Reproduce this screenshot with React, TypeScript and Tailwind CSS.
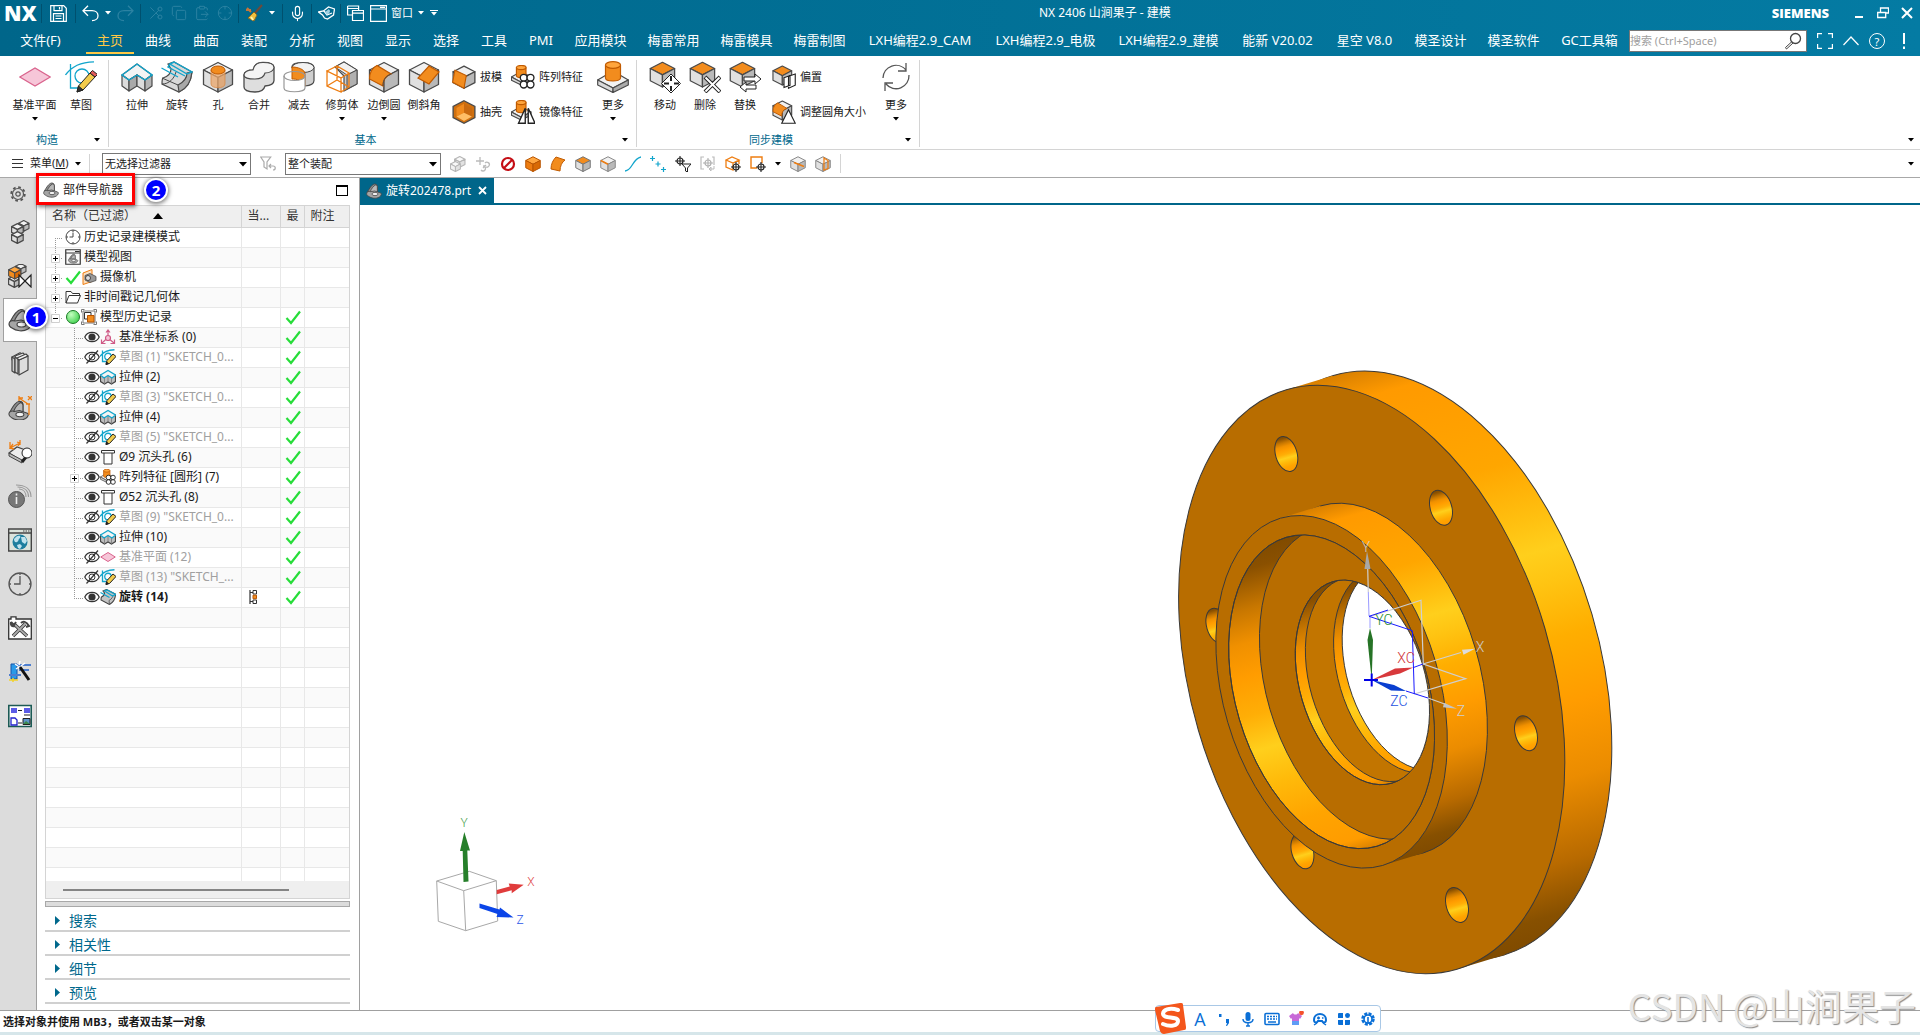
import type { ReactNode } from 'react';
import { ClipboardPaste, Copy, Crosshair, Mic, Scissors } from 'lucide-react';

/* ---------- shared drawing helpers ---------- */

function Svg({ size = 32, box = 32, children }: { size?: number; box?: number; children: ReactNode }) {
  return (
    <svg width={size} height={size} viewBox={`0 0 ${box} ${box}`} fill="none" aria-hidden="true" className="shrink-0">
      {children}
    </svg>
  );
}

function Caret({ className = 'text-black' }: { className?: string }) {
  return (
    <svg width="6" height="4" viewBox="0 0 6 4" aria-hidden="true" className={className}>
      <path d="M0 0h6L3 3.6z" fill="currentColor" />
    </svg>
  );
}

const EDGE = '#4a4a4a';
const ORANGE = '#f28c1e';

function Cube({ top = '#f1f1f1', left = '#e0e0e0', right = '#b9b9b9', edge = EDGE, line = 1.3 }) {
  return (
    <g stroke={edge} strokeWidth={line} strokeLinejoin="round">
      <path d="M16 1.5 30.5 9 16 16.5 1.5 9z" fill={top} />
      <path d="M1.5 9 16 16.5V31L1.5 23.5z" fill={left} />
      <path d="M30.5 9 16 16.5V31l14.5-7.5z" fill={right} />
    </g>
  );
}

function Pencil() {
  return (
    <g stroke="#222" strokeWidth="1" strokeLinejoin="round">
      <path d="m12 31 1.5-6L25 12l5 4-12 13z" fill="#f2cb4c" />
      <path d="m25 12 2.5-2.5 5 4L30 16z" fill="#e05a5a" />
      <path d="m12 31 1.5-6 4.5 4z" fill="#333" />
    </g>
  );
}

function Boss({ line = 1.2 }) {
  return (
    <g stroke={EDGE} strokeWidth={line} strokeLinejoin="round">
      <path d="M.7 19 16 10l15.3 9L16 27z" fill="#f2f2f2" />
      <path d="M.7 19v5L16 31.5V27z" fill="#dadada" />
      <path d="M31.3 19v5L16 31.5V27z" fill="#ababab" />
      <path d="M8.5 4v13c0 4 15 4 15 0V4z" fill={ORANGE} stroke="#c05a00" />
      <ellipse cx="16" cy="4" rx="7.5" ry="3.3" fill="#ffa53c" stroke="#c05a00" />
    </g>
  );
}

/* ---------- ribbon icons ---------- */

const icons = {
  plane: (
    <path d="M.8 16 16 7l15.2 9L16 25z" fill="#f6c6d8" stroke="#d9638c" strokeWidth="1.2" />
  ),
  sketch: (
    <>
      <path d="M5.5 3v24H17M.5 14C6 6 15 1 29 .8" stroke="#12a5cc" strokeWidth="1.3" />
      <circle cx="17" cy="15" r="7" stroke="#12a5cc" strokeWidth="1.3" />
      <Pencil />
    </>
  ),
  extrude: (
    <>
      <g stroke={EDGE} strokeWidth="1.2" strokeLinejoin="round">
        <path d="m1 14 15-11 15 11-7 5-8-5-8 5z" fill="#f4f4f4" />
        <path d="M1 14v11l7 5V19z" fill="#dcdcdc" />
        <path d="M8 19v11l8-5V14z" fill="#a9a9a9" />
        <path d="M16 14v11l8 5V19z" fill="#dcdcdc" />
        <path d="M24 19v11l7-5V14z" fill="#b5b5b5" />
      </g>
      <path d="m1 14 15-11 15 11-7 5-8-5-8 5z" stroke="#12a5cc" strokeWidth="1.4" />
    </>
  ),
  revolve: (
    <>
      <path d="M7 3 13 1l18 10c-1 10-6 17-13 20L1 23c0-3 0-5 1-6 6-2 8-6 8-9z" fill="#d9d9d9" stroke={EDGE} strokeWidth="1.2" />
      <path d="M31 11c-1 10-6 17-13 20l-1-7c6-3 9-8 9-12z" fill="#a8a8a8" stroke={EDGE} strokeWidth="1.2" />
      <path d="M1 23c7 0 12-5 14-12M17 24 1 17" stroke={EDGE} />
      <path d="M.5 7 17 16M9 3l4-2 18 10-5 2zM9 3 7 6l17 9" stroke="#12a5cc" strokeWidth="1.4" />
    </>
  ),
  hole: (
    <>
      <Cube />
      <path d="M9 9v14c0 5 14 5 14 0V9z" fill="#e9a66a" fillOpacity=".75" stroke="#d58a4a" strokeWidth=".8" />
      <ellipse cx="16" cy="9" rx="7" ry="4" fill={ORANGE} stroke="#c05a00" />
    </>
  ),
  unite: (
    <>
      <path
        d="M1 14c0-3 4-5 9-5 1-5 4-7.5 10-7.5 7 0 11 2 11 5v13c0 3-4 5-9 5.500-1 4-4 6-10 6-7 0-11-2-11-5z"
        fill="#dedede" stroke={EDGE} strokeWidth="1.3"
      />
      <path
        d="M1 14c0-3 4-5 9-5 1-5 4-7.5 10-7.5 7 0 11 2 11 5s-4 5.5-9 5.5c-1 4-4 6-10 6-7 0-11-1-11-4z"
        fill="#f4f4f4" stroke={EDGE} strokeWidth="1.1"
      />
    </>
  ),
  subtract: (
    <>
      <path d="M9 6c0-3 4-4.5 11-4.5s11 2 11 5v13c0 3-3 5-9 5.5z" fill="#cfcfcf" stroke={EDGE} strokeWidth="1.2" />
      <ellipse cx="20" cy="6.5" rx="11" ry="5" fill="#f2f2f2" stroke={EDGE} />
      <path d="M9 6c5 0 13 2 13 7v12c-3-6-8-7-13-7z" fill={ORANGE} stroke="#c05a00" />
      <path d="M1 15v12c0 5 21 5 21 0V15c0 3-5 4.500-10.500 4.500S1 18 1 15z" fill="#fff" />
      <path d="M1 15v12c0 5 21 5 21 0V15" stroke="#999" strokeWidth="1.2" />
      <ellipse cx="11.5" cy="15" rx="10.5" ry="4.5" stroke="#999" strokeWidth="1.2" />
    </>
  ),
  trim: (
    <>
      <path d="M9 6 18 1l13 8v14l-13 7V15z" fill="#cccccc" stroke={EDGE} strokeWidth="1.2" />
      <path d="M9 6 18 1l13 8-10 5z" fill="#f1f1f1" stroke={EDGE} />
      <path d="M21 14v14l10-5V9z" fill="#b0b0b0" stroke={EDGE} />
      <path d="m1 10 10-5 12 7-8 5zM1 10v15l14 6V17zM15 31l8-5V12M11 5v14M1 25l10-6 12 7" stroke="#ee7d11" strokeWidth="1.3" />
    </>
  ),
  blend: (
    <>
      <Cube />
      <path d="M1.5 18C1.5 11 4 7 9 4.5L23 13c-5 2-8 5-8 12z" fill={ORANGE} stroke="#c05a00" strokeWidth="1.2" />
      <path d="M15 25c0-7 3-10 8-12" stroke={EDGE} />
    </>
  ),
  chamfer: (
    <>
      <Cube />
      <path d="m21 5 10 6-10 12-11-6z" fill={ORANGE} stroke="#c05a00" strokeWidth="1.2" />
    </>
  ),
  draft: (
    <>
      <Cube line={1.8} />
      <path d="M4 7l15 7-3 17L.8 23z" fill={ORANGE} stroke="#c05a00" strokeWidth="1.5" />
    </>
  ),
  shell: (
    <>
      <path d="M16 1 30.5 8.5v15L16 31 1.5 23.5v-15z" fill="#d0700f" stroke={EDGE} strokeWidth="1.8" />
      <path d="M16 5v12L6 22V10.500z" fill="#f08a1d" />
      <path d="m16 5 10.500 6v11L16 17z" fill="#c96a10" />
      <path d="M6 22l10-5 10.500 5L16 28z" fill="#ffbe66" />
    </>
  ),
  pattern: (
    <>
      <g transform="scale(.85)"><Boss line={1.8} /></g>
      <g fill="#fff" stroke="#222" strokeWidth="1.8">
        <circle cx="17" cy="17" r="4.600" /><circle cx="26" cy="17" r="4.600" />
        <circle cx="17" cy="26" r="4.600" /><circle cx="26" cy="26" r="4.600" />
      </g>
    </>
  ),
  mirror: (
    <>
      <g transform="scale(.85)"><Boss line={1.8} /></g>
      <path d="M19 11v20h-9zM23 11v20h9z" fill="#fff" stroke="#222" strokeWidth="1.8" />
    </>
  ),
  boss: <Boss />,
  move: (
    <>
      <g transform="scale(.84)"><Cube top={ORANGE} line={1.5} /></g>
      <path d="m22 13 9.5 9.5L22 32l-9.5-9.5z" fill="#fff" stroke="#222" />
      <path d="M22 15v5M22 25v5M15 22.5h5M25 22.5h5" stroke="#222" strokeWidth="2" />
    </>
  ),
  remove: (
    <>
      <g transform="scale(.84)"><Cube top={ORANGE} line={1.5} /></g>
      <path d="m16 16 15 15M31 16 16 31" stroke="#222" strokeWidth="4" />
      <path d="m16.500 16.500 14 14M30.500 16.500l-14 14" stroke="#fff" strokeWidth="2" />
    </>
  ),
  replace: (
    <>
      <g transform="scale(.84)"><Cube top={ORANGE} line={1.5} /></g>
      <path d="M15 16h11v-3l6 5-6 5v-3H15zM27 24H17v-3l-6 5 6 5v-3h10z" fill="#fff" stroke="#222" />
    </>
  ),
  offset: (
    <>
      <g transform="scale(.86)"><Cube top={ORANGE} line={1.8} /></g>
      <path d="m22 15 9-3v15l-9 4zM16 17l8-3v13l-8 3z" fill="#fff" stroke="#222" strokeWidth="1.5" />
    </>
  ),
  resize: (
    <>
      <g transform="scale(.86)">
        <Cube line={1.8} />
        <path d="M1.500 18C1.500 11 4 7 9 4.500L23 13c-5 2-8 5-8 12z" fill={ORANGE} stroke="#c05a00" strokeWidth="1.5" />
      </g>
      <path d="M22 13 31 31H13z" fill="#fff" stroke="#222" strokeWidth="1.5" />
    </>
  ),
  refresh: (
    <path d="M3 17A13 13 0 0 1 26 9M26 2v8h-8M29 14a13 13 0 0 1-23 9M5 30v-8h8" stroke="#555" strokeWidth="1.3" />
  ),
};

type RibbonItem = { label: string; width: string; icon: ReactNode; more?: boolean };

function BigButton({ label, width, icon, more }: RibbonItem) {
  return (
    <button type="button" className={`${width} flex shrink-0 flex-col items-center`}>
      <Svg>{icon}</Svg>
      <span className="mt-1 whitespace-nowrap text-[11px] leading-4">{label}</span>
      {more && <span className="mt-1 flex h-1 items-center"><Caret /></span>}
    </button>
  );
}

function SmallButton({ label, icon }: { label: string; icon: ReactNode }) {
  return (
    <button type="button" className="flex h-6 items-center gap-1 whitespace-nowrap text-[11px]">
      <Svg size={24}>{icon}</Svg>
      {label}
    </button>
  );
}

function RibbonGroup({ title, children }: { title: string; children: ReactNode }) {
  return (
    <section className="flex flex-col border-r border-[#d4d4d4]">
      <div className="flex h-[73px] pt-px">{children}</div>
      <div className="flex h-[14px] items-center pr-2">
        <h2 className="flex-1 text-center text-[11px] leading-[14px] text-[#00688c]">{title}</h2>
        <Caret />
      </div>
    </section>
  );
}

const basicTools: RibbonItem[] = [
  { label: '拉伸', width: 'w-[40px]', icon: icons.extrude },
  { label: '旋转', width: 'w-[40px]', icon: icons.revolve },
  { label: '孔', width: 'w-[42px]', icon: icons.hole },
  { label: '合并', width: 'w-[40px]', icon: icons.unite },
  { label: '减去', width: 'w-[40px]', icon: icons.subtract },
  { label: '修剪体', width: 'w-[46px]', icon: icons.trim, more: true },
  { label: '边倒圆', width: 'w-[38px]', icon: icons.blend, more: true },
  { label: '倒斜角', width: 'w-[42px]', icon: icons.chamfer },
];

const syncTools: RibbonItem[] = [
  { label: '移动', width: 'w-[40px]', icon: icons.move },
  { label: '删除', width: 'w-[40px]', icon: icons.remove },
  { label: '替换', width: 'w-[40px]', icon: icons.replace },
];

function Ribbon() {
  return (
    <div className="flex h-[94px] items-start border-b border-[#d4d4d4] bg-white pt-1 text-[#1a1a1a]">
      <RibbonGroup title="构造">
        <div className="flex pl-2 pr-[7px]">
          <BigButton label="基准平面" width="w-[53px]" icon={icons.plane} more />
          <BigButton label="草图" width="w-[40px]" icon={icons.sketch} />
        </div>
      </RibbonGroup>
      <RibbonGroup title="基本">
        <div className="flex pl-2">
          {basicTools.map(t => <BigButton key={t.label} {...t} />)}
        </div>
        <div className="flex flex-col gap-[11px] pl-[7px] pt-1">
          <SmallButton label="拔模" icon={icons.draft} />
          <SmallButton label="抽壳" icon={icons.shell} />
        </div>
        <div className="flex flex-col gap-[11px] pl-[9px] pt-1">
          <SmallButton label="阵列特征" icon={icons.pattern} />
          <SmallButton label="镜像特征" icon={icons.mirror} />
        </div>
        <div className="flex pl-[10px] pr-[3px]">
          <BigButton label="更多" width="w-[40px]" icon={icons.boss} more />
        </div>
      </RibbonGroup>
      <RibbonGroup title="同步建模">
        <div className="flex pl-2">
          {syncTools.map(t => <BigButton key={t.label} {...t} />)}
        </div>
        <div className="flex flex-col gap-[11px] pl-[7px] pt-1">
          <SmallButton label="偏置" icon={icons.offset} />
          <SmallButton label="调整圆角大小" icon={icons.resize} />
        </div>
        <div className="flex pl-[10px] pr-[3px]">
          <BigButton label="更多" width="w-[40px]" icon={icons.refresh} more />
        </div>
      </RibbonGroup>
      <button type="button" aria-label="功能区选项" className="ml-auto mr-[6px] flex h-[87px] items-end pb-[5px]">
        <Caret />
      </button>
    </div>
  );
}

/* ---------- title bar and menu ---------- */

const menus: { label: string; width: string }[] = [
  ...['曲线', '曲面', '装配', '分析', '视图', '显示', '选择', '工具'].map(label => ({ label, width: 'w-12' })),
  { label: 'PMI', width: 'w-[46px]' },
  { label: '应用模块', width: 'w-[73px]' },
  { label: '梅雷常用', width: 'w-[73px]' },
  { label: '梅雷模具', width: 'w-[73px]' },
  { label: '梅雷制图', width: 'w-[73px]' },
  { label: 'LXH编程2.9_CAM', width: 'w-[128px]' },
  { label: 'LXH编程2.9_电极', width: 'w-[123px]' },
  { label: 'LXH编程2.9_建模', width: 'w-[123px]' },
  { label: '能新 V20.02', width: 'w-[95px]' },
  { label: '星空 V8.0', width: 'w-[79px]' },
  { label: '模圣设计', width: 'w-[73px]' },
  { label: '模圣软件', width: 'w-[73px]' },
  { label: 'GC工具箱', width: 'w-[79px]' },
];

function Divider() {
  return <span className="h-[19px] w-px shrink-0 bg-[#00506e]" />;
}

function Header() {
  return (
    <header className="bg-linear-to-r from-[#00668a] to-[#047ba3] text-white">
      <div className="flex h-[26px] items-center">
        <span className="w-[41px] pl-1 font-['Open_Sans',sans-serif] text-[21px] font-extrabold leading-[26px]">NX</span>
        <Divider />
        <button type="button" aria-label="保存" className="flex w-[33px] justify-center">
          <Svg size={17} box={17}>
            <path d="M.7.7h13l2.600 2.600v13H.7zM4 .7v5h8v-5M9.500 2v2.500M3.500 16V8.700h10V16M5.500 11h6M5.500 13.500h6" stroke="#fff" strokeWidth="1.2" />
          </Svg>
        </button>
        <Divider />
        <button type="button" aria-label="撤消" className="flex w-[29px] justify-center">
          <Svg size={17} box={17}>
            <path d="M6 .7 1 5.700l5 5M1 5.700h9c8 0 8 10 0 10" stroke="#fff" strokeWidth="1.3" />
          </Svg>
        </button>
        <Caret className="text-white" />
        <button type="button" aria-label="重做" className="flex w-[29px] justify-center">
          <Svg size={17} box={17}>
            <path d="m11 .7 5 5-5 5M16 5.700H7c-8 0-8 10 0 10" stroke="#2b82a2" strokeWidth="1.3" />
          </Svg>
        </button>
        <Divider />
        <div className="flex w-[97px] items-center gap-[7px] pl-[7px] text-[#2b82a2]">
          <button type="button" aria-label="剪切"><Scissors size={16} strokeWidth={1.5} className="rotate-180" /></button>
          <button type="button" aria-label="复制"><Copy size={16} strokeWidth={1.5} /></button>
          <button type="button" aria-label="粘贴"><ClipboardPaste size={16} strokeWidth={1.5} /></button>
          <button type="button" aria-label="定位"><Crosshair size={16} strokeWidth={1.5} /></button>
        </div>
        <Divider />
        <button type="button" aria-label="格式刷" className="flex w-[30px] justify-center">
          <Svg size={18} box={18}>
            <path d="m17 1-7 8" stroke="#6d4a3a" strokeWidth="2" />
            <path d="M1 6h5M2 4l4 4" stroke="#c4763a" strokeWidth="2" />
            <path d="m9 8 3 3-3 6-6-3z" fill="#f0c040" stroke="#8a6a20" />
            <path d="m6 13 2 3" stroke="#fff5b0" strokeWidth="2" />
          </Svg>
        </button>
        <Caret className="text-white" />
        <span className="w-[7px]" />
        <Divider />
        <button type="button" aria-label="语音" className="flex w-[28px] justify-center"><Mic size={17} strokeWidth={1.6} /></button>
        <Divider />
        <button type="button" aria-label="触控" className="flex w-[28px] justify-center">
          <Svg size={17} box={17}>
            <path d="m.5 7 5-1 5-4 6 2-1 6-6 4-3-1-2-3zM6 6l3 4 5-2M9 10l2-5" stroke="#fff" strokeWidth="1.3" />
            <path d="m7 7 4-3 1 3-3 3z" fill="#9fd0e2" />
          </Svg>
        </button>
        <Divider />
        <button type="button" aria-label="切换窗口" className="flex w-[29px] justify-center">
          <Svg size={17} box={17}>
            <path d="M.6 1h11v4M.6 1v9H5M.6 3.500h11M5.500 5.500h11v10h-11zM5.500 8.200h11" stroke="#fff" strokeWidth="1.2" />
          </Svg>
        </button>
        <button type="button" className="flex items-center gap-1 whitespace-nowrap text-[11px]">
          <Svg size={17} box={17}><path d="M.6.6h15.800v15.800H.6zM.6 4h15.800M10 2.300h5" stroke="#fff" strokeWidth="1.2" /></Svg>
          窗口
          <span className="pl-px"><Caret className="text-white" /></span>
        </button>
        <button type="button" aria-label="自定义快速访问" className="ml-[6px] flex flex-col items-center gap-px">
          <span className="h-px w-2 bg-white" />
          <Caret className="text-white" />
        </button>
        <h1 className="flex-1 text-center text-[12px] leading-[26px]">NX 2406 山涧果子 - 建模</h1>
        <span className="mr-[24px] font-['Open_Sans',sans-serif] text-[13px] font-extrabold leading-7">SIEMENS</span>
        <div className="flex w-[67px] items-center justify-between pr-[7px]">
          <button type="button" aria-label="最小化">
            <Svg size={12} box={12}><path d="M2 10h8" stroke="#fff" strokeWidth="2" /></Svg>
          </button>
          <button type="button" aria-label="还原">
            <Svg size={12} box={12}><path d="M3.500 5V1h8v5H9M.7 5.500h8v5h-8z" stroke="#fff" strokeWidth="1.3" /></Svg>
          </button>
          <button type="button" aria-label="关闭">
            <Svg size={12} box={12}><path d="m1 1 10 10M11 1 1 11" stroke="#fff" strokeWidth="2" /></Svg>
          </button>
        </div>
      </div>
      <nav className="flex h-[30px] items-center whitespace-nowrap text-[13px]">
        <button type="button" className="mr-[5px] w-[81px] shrink-0 text-center">文件(F)</button>
        <button type="button" className="flex h-[30px] w-12 shrink-0 flex-col items-center justify-between pb-[2px] text-[#ffc845]">
          <span className="leading-[29px]">主页</span>
          <span className="-mt-[3px] h-[2px] w-full shrink-0 bg-[#ffc845]" />
        </button>
        {menus.map(m => (
          <button key={m.label} type="button" className={`${m.width} shrink-0 text-center`}>{m.label}</button>
        ))}
        <div className="ml-auto flex items-center pr-2">
          <label className="flex h-[22px] w-[178px] items-center border border-[#777] bg-white pr-1">
            <input placeholder="搜索 (Ctrl+Space)" aria-label="搜索" className="min-w-0 flex-1 text-[11px] text-black outline-none placeholder:text-[#a0a0a0]" />
            <Svg size={18} box={18}>
              <circle cx="11.500" cy="6.500" r="5" stroke="#444" strokeWidth="1.3" />
              <path d="m8 9.500-6.500 6 1 1.500L9 11" stroke="#444" />
            </Svg>
          </label>
          <button type="button" aria-label="全屏" className="ml-[10px]">
            <Svg size={16} box={16}><path d="M.6 5V.6H5M11 .6h4.400V5M15.400 11v4.400H11M5 15.400H.6V11" stroke="#fff" strokeWidth="1.2" /></Svg>
          </button>
          <button type="button" aria-label="最小化功能区" className="ml-[10px]">
            <Svg size={16} box={16}><path d="m.5 12 7.500-8 7.500 8" stroke="#fff" strokeWidth="1.2" /></Svg>
          </button>
          <button type="button" aria-label="帮助" className="ml-[10px] flex h-4 w-4 items-center justify-center rounded-full border border-white text-[11px] leading-none">?</button>
          <button type="button" aria-label="提示" className="ml-[11px]">
            <Svg size={16} box={16}><path d="M8 0v11M8 13.500V16" stroke="#fff" strokeWidth="2" /></Svg>
          </button>
        </div>
      </nav>
    </header>
  );
}

/* ---------- selection bar ---------- */

const target = (
  <>
    <circle cx="11" cy="11" r="3" fill="#fff" stroke="#222" strokeWidth="1.2" />
    <path d="M11 6v10M6 11h10" stroke="#222" strokeWidth="1.1" />
  </>
);

const filterIcons: { label: string; art: ReactNode }[] = [
  { label: '多选', art: <g opacity=".4"><g transform="translate(4 0) scale(.36)"><Cube line={3} /></g><g transform="translate(0 5) scale(.34)"><Cube line={3} /></g></g> },
  { label: '链接', art: <path d="M1 5h8M5 1v8M8 12l3-3M6 14a2.500 2.500 0 1 0 2-4M11 11a2.500 2.500 0 1 0-1-4" stroke="#bbb" strokeWidth="1.3" /> },
  { label: '禁止', art: <><circle cx="8" cy="8" r="6" stroke="#c40d14" strokeWidth="2.2" /><path d="m4 12 8-8" stroke="#c40d14" strokeWidth="2.2" /></> },
  { label: '实体', art: <g transform="scale(.5)"><Cube top="#ffa63f" left="#ee7d11" right="#d96a05" edge="#b85400" line={2} /></g> },
  { label: '片体', art: <path d="M1 13C1 8 3 4 6 1l9 3c-3 2-5 6-5 11z" fill={ORANGE} stroke="#c05a00" /> },
  { label: '面', art: <g transform="scale(.5)"><Cube top={ORANGE} edge="#777" line={2} /></g> },
  { label: '边', art: <g transform="scale(.5)"><Cube edge="#888" line={2} /><path d="m1.500 9 14.500 7.500" stroke="#ee7d11" strokeWidth="3" /></g> },
  { label: '曲线过滤', art: <path d="M0 15C8 14 7 3 16 1" stroke="#12a5cc" strokeWidth="1.3" /> },
  { label: '点', art: <path d="M0 2.500h5M2.500 0v5M5.500 8h5M8 5.500v5M11 13.500h5M13.500 11v5" stroke="#12a5cc" strokeWidth="1.2" /> },
  { label: '捕捉过滤', art: <><g transform="translate(-6 -6)">{target}</g><path d="M7 8h9l-3.500 4v4l-2-1v-3z" fill="#fff" stroke="#222" /></> },
  { label: '区域', art: <><path d="M4 1H1v12h3M12 1h2v8" stroke="#bbb" strokeWidth="1.2" /><g opacity=".35" transform="translate(-3 -4)">{target}</g><path d="m9 13 2-2v4zM10 13h4v-3" stroke="#bbb" /></> },
  { label: '立体捕捉', art: <><path d="m1 4 6-3 7 3-6 3zM1 4v7l7 3V7M14 4v4" stroke="#ee7d11" strokeWidth="1.3" />{target}</> },
  { label: '矩形选择', art: <><path d="M12 7V1H1v11h6" stroke="#ee7d11" strokeWidth="1.4" />{target}</> },
];

function Select({ label, value, width }: { label: string; value: string; width: string }) {
  return (
    <div className={`${width} relative shrink-0`}>
      <select aria-label={label} className="h-[22px] w-full appearance-none border border-[#777] bg-white pl-[2px] text-[11px] leading-5">
        <option>{value}</option>
      </select>
      <span className="pointer-events-none absolute right-[4px] top-[9px]">
        <svg width="8" height="5" viewBox="0 0 8 5" aria-hidden="true"><path d="M0 0h8L4 4.500z" /></svg>
      </span>
    </div>
  );
}

function SelectionBar() {
  return (
    <div className="flex h-7 items-center border-b border-[#a8a8a8] bg-white text-[11px] text-[#1a1a1a]">
      <button type="button" className="flex w-[89px] items-center pl-3">
        <Svg size={11} box={11}><path d="M0 1.500h11M0 5.500h11M0 9.500h11" stroke="#333" /></Svg>
        <span className="mx-[6px] whitespace-nowrap pl-px">菜单(<u>M</u>)</span>
        <Caret />
      </button>
      <span className="mr-[12px] h-[19px] w-px bg-[#d4d4d4]" />
      <Select label="类型过滤器" value="无选择过滤器" width="w-[149px]" />
      <button type="button" aria-label="重置过滤器" className="flex w-[34px] justify-center">
        <Svg size={16} box={16}><path d="M.7 1h10L7 6v7l-3-2V6zM9 10h4c3 0 3 4 0 4M11 8l-2 2 2 2" stroke="#aaa" strokeWidth="1.2" /></Svg>
      </button>
      <Select label="选择范围" value="整个装配" width="w-[156px]" />
      <div className="flex pl-1">
        {filterIcons.map(f => (
          <button key={f.label} type="button" aria-label={f.label} className="flex w-[25px] justify-center">
            <Svg size={16} box={16}>{f.art}</Svg>
          </button>
        ))}
      </div>
      <span className="flex w-[15px] justify-center"><Caret /></span>
      <button type="button" aria-label="截面" className="flex w-[25px] justify-center">
        <Svg size={16}><Cube edge="#888" line={2} /><path d="m8 13 20 8" stroke="#ee7d11" strokeWidth="3" /></Svg>
      </button>
      <button type="button" aria-label="剖切" className="flex w-[25px] justify-center">
        <Svg size={16}><Cube edge="#888" line={2} /><path d="m18 4 8 5v16l-8 3z" stroke="#ee7d11" strokeWidth="2.5" /></Svg>
      </button>
      <span className="ml-[5px] h-[19px] w-px bg-[#d4d4d4]" />
      <span className="ml-auto mr-[6px]"><Caret /></span>
    </div>
  );
}

/* ---------- resource rail ---------- */

function PartGlyph() {
  return (
    <g stroke="#444" strokeWidth="1.2" strokeLinejoin="round">
      <path d="M2 14C5 8 9 2 13 1.500c3 0 4 2 4 4V14l-8 3z" fill="#8d8d8d" />
      <path d="M6 14c2-6 5-9 8-11 2 0 3 1 3 3v8z" fill="#b9b9b9" />
      <path d="M1 16c0-3 3-4 6-3l6-1 9 3c2 1 1 4-2 6-5 3-12 2-16-1-2-1-3-2-3-4z" fill="#a5a5a5" />
      <ellipse cx="13.500" cy="16.500" rx="4.500" ry="2.500" fill="#f2f2f2" />
    </g>
  );
}

const railItems: { label: string; art: ReactNode }[] = [
  {
    label: '装配导航器',
    art: <><g transform="translate(10 0) scale(.36)"><Cube line={3} /></g><g transform="translate(3 3) scale(.4)"><Cube line={3} /></g><g transform="translate(3 11) scale(.4)"><Cube line={3} /></g></>,
  },
  {
    label: '约束导航器',
    art: <><g transform="translate(7 -1) scale(.36)"><Cube line={3} /></g><g transform="translate(0 11) scale(.4)"><Cube line={3} /></g><g transform="translate(0 2) scale(.42)"><Cube top="#ffa63f" left={ORANGE} right="#d96a05" line={2.500} /></g><path d="m11 11 12 12V11L11 23z" fill="#fff" stroke="#222" strokeWidth="1.2" /></>,
  },
  { label: '部件导航器', art: <PartGlyph /> },
  {
    label: '重用库',
    art: (
      <g stroke="#444" strokeWidth="1.2" strokeLinejoin="round">
        <path d="M4 5 12 .8 14 2v4L4 8z" fill="#eee" />
        <path d="M4 5v14l3 2V7z" fill="#ccc" />
        <path d="m7 4 8-3 2 2v4L8 8z" fill="#eee" />
        <path d="M7 5v15l3 2V7z" fill="#ccc" />
        <path d="m11 8 9-4v14l-9 5z" fill="#dedede" />
        <path d="m11 8-2-2 9-4 2 2z" fill="#f6f6f6" />
      </g>
    ),
  },
  {
    label: 'PMI 导航器',
    art: <><g transform="translate(0 4) scale(.88)"><PartGlyph /></g><path d="M21 8v11M11 2l9 6M11 0v5M11 2h4M20 0l4 4M24 0l-4 4M18 8h4" stroke="#ee7d11" strokeWidth="1.3" /></>,
  },
  {
    label: '检查',
    art: <><path d="m1 13 8-6 14 5-9 9z" fill="#ececec" stroke="#444" strokeWidth="1.2" /><path d="M1 13v3l13 7v-3z" fill="#bbb" stroke="#444" /><path d="M2 8 12 3M2 2v7M12 0v5M5 4 2 8l4 1M9 2l3 1-2 3" stroke="#ee7d11" strokeWidth="1.3" /><path d="m14 22 4-5" stroke="#222" strokeWidth="3" /><circle cx="19" cy="13" r="5" fill="#fff" stroke="#222" /></>,
  },
  {
    label: '信息',
    art: <><circle cx="8.500" cy="15.500" r="8" fill="#777" stroke="#555" /><path d="M8.500 13v7M8.500 9.500v2" stroke="#eee" strokeWidth="1.6" /><path d="M11 5c5 0 7 4 7 8M9.500 3c7 0 11 4 11 10M8 1c9 0 15 4 15 12" stroke="#999" strokeWidth="1.1" /></>,
  },
  {
    label: '浏览器',
    art: <><path d="M.7 1h22.600v22H.7zM.7 5h22.600" stroke="#444" strokeWidth="1.4" fill="#dce4dc" /><path d="M15 3h7" stroke="#444" strokeDasharray="1.500 1" /><circle cx="12" cy="14" r="7.500" fill="#1d7f9e" /><path d="M6 11c2-3 5-4 6-3s0 2-1 3 0 2-2 3-3-1-3-3zM13 9l4 0 2 4-2 3-3-2zM9 17l3-1 2 2-2 3-2-1z" fill="#bfe4ee" /></>,
  },
  {
    label: '历史记录',
    art: <><circle cx="12" cy="12" r="11" stroke="#555" strokeWidth="1.3" /><path d="M12 4v8H6M12 1v2M12 21v2M1 12h2M21 12h2" stroke="#555" strokeWidth="1.3" /></>,
  },
  {
    label: '工艺',
    art: <><path d="M.7 23V3H3V.8h5V3h15.300v20z" fill="#fff" stroke="#333" strokeWidth="1.3" /><path d="m5 20 12-12M6 8l13 12" stroke="#333" strokeWidth="3.5" /><path d="m5 20 12-12M6 8l13 12" stroke="#aaa" strokeWidth="1.8" /><path d="M13 7c2-2 5-2 8 3l-3 1M3 6l3 3 2-3M3 6c-1 3 1 5 4 4" stroke="#444" strokeWidth="2" /></>,
  },
  {
    label: '向导',
    art: <><path d="M3 4h6v15H3z" fill="#2a9ae8" stroke="#1453a8" /><path d="M8 5h15M11 10h10M1 15h12" stroke="#4d7fd0" strokeWidth="2" /><path d="m12 7 9 13" stroke="#111" strokeWidth="3" /><path d="m11 5 1-4M7 4l3 2M13 6l4-3M8 9l3-2" stroke="#fff" strokeWidth="1.5" /><path d="M1 20h9M5 18v4" stroke="#f2d22c" strokeWidth="1.5" /></>,
  },
  {
    label: '角色',
    art: <><path d="M.8 1.500h22.400v21H.8z" fill="#fff" stroke="#1c5a55" strokeWidth="1.6" /><path d="M3 4h6v5H3zM16 4h6v5h-6z" fill="#5b5be6" /><path d="M10 6.500h4M10 19h4M16 11h6" stroke="#222" strokeWidth="1.2" /><path d="M3 14h4l2 2v5H3z" fill="#fff" stroke="#2222cc" strokeWidth="1.3" /><path d="M15 14.500h7v6h-7z" fill="#5d93c9" stroke="#222" /><path d="m15 20 3-3 4 3z" fill="#3c8a4c" /></>,
  },
];

function StepBadge({ n }: { n: number }) {
  return (
    <span className="flex h-6 w-6 items-center justify-center rounded-full border-2 border-white bg-[#0000ff] text-[15px] font-bold leading-none text-white shadow-[0_1px_4px_1px_rgba(0,0,0,0.5)]">
      {n}
    </span>
  );
}

function Rail() {
  return (
    <aside className="flex w-[37px] shrink-0 flex-col border-r border-[#a0a0a0] bg-[#dcdcdc]">
      <button type="button" aria-label="资源条选项" className="flex h-8 w-9 shrink-0 items-center justify-center">
        <Svg size={16} box={16}>
          <circle cx="8" cy="8" r="6.800" stroke="#555" strokeWidth="1.800" strokeDasharray="2.700 2.640" />
          <circle cx="8" cy="8" r="5.500" stroke="#555" strokeWidth="1.2" />
          <circle cx="8" cy="8" r="2.200" stroke="#555" strokeWidth="1.2" />
        </Svg>
      </button>
      {railItems.map(item => {
        const selected = item.label === '部件导航器';
        return (
          <button
            key={item.label}
            type="button"
            aria-label={item.label}
            className={`relative flex h-11 shrink-0 items-center ${selected ? 'ml-[3px] -mr-px border border-r-0 border-[#a0a0a0] bg-white pl-1' : 'pl-2'}`}
          >
            <Svg size={24} box={24}>{item.art}</Svg>
            {selected && <span className="absolute left-5 top-[6px] z-10"><StepBadge n={1} /></span>}
          </button>
        );
      })}
    </aside>
  );
}

/* ---------- part navigator ---------- */

// tree icons are drawn at half size, so their lines are twice as heavy
const nodeArt = {
  sketch: (
    <>
      <path d="M5 3v22h8M0 15C5 7 14 2 29 1.500" stroke="#12a5cc" strokeWidth="2.6" />
      <circle cx="16" cy="15" r="6.500" stroke="#12a5cc" strokeWidth="2.6" />
      <path d="m12 31 2-8L26 10l6 5-13 14z" fill="#f2cb4c" stroke="#222" strokeWidth="2" />
      <path d="m12 31 1-5 4 3z" fill="#222" stroke="#222" strokeWidth="2" />
    </>
  ),
  extrude: (
    <>
      <path d="M1 12v13l8 5 7-4 7 4 8-5V12z" fill="#bdbdbd" stroke="#444" strokeWidth="2.4" />
      <path d="M9 17v13M23 17v13M16 14v12" stroke="#777" strokeWidth="1.6" />
      <path d="m1 12 15-9 15 9-7 6-8-5-8 5z" fill="#f4f4f4" stroke="#12a5cc" strokeWidth="2.6" />
    </>
  ),
  revolve: (
    <>
      <path d="M6 4 13 1l18 9c0 10-5 17-12 21L2 22c0-3 0-5 1-6 5-2 6-6 6-8z" fill="#c4c4c4" stroke="#444" strokeWidth="2.2" />
      <path d="M19 31l-1-8c6-3 8-8 8-11" stroke="#666" strokeWidth="2" />
      <path d="M1 7 19 17M9 4l5-2 17 9-6 3z" stroke="#12a5cc" strokeWidth="2.6" />
    </>
  ),
  plane: <path d="M1.5 16 16 7l14.500 9L16 25z" fill="#f6c6d8" stroke="#d9638c" strokeWidth="2" />,
  pattern: icons.pattern,
  csys: (
    <g stroke="#cf5a86" strokeWidth="2.4">
      <path d="M16 3v14L4 28M16 18l12 10M12 7l4-5 4 5M3 21v8h8M29 21v8h-8" />
      <circle cx="16" cy="18" r="5" fill="#f6c6d8" />
    </g>
  ),
  hole: <path d="M3 3h26v5H3zM8 8v22h16V8" fill="#fff" stroke="#333" strokeWidth="2" />,
  clock: <><circle cx="16" cy="16" r="14" fill="#fff" stroke="#444" strokeWidth="2" /><path d="M16 7v9H9M16 2v4M16 26v4M2 16h4M26 16h4" stroke="#444" strokeWidth="2" /></>,
  view: <><path d="M1.500 1.500h29v29h-29zM1.500 8h29M20 5h9" stroke="#333" strokeWidth="2.4" /><g transform="translate(6 9) scale(.85)"><PartGlyph /></g></>,
  camera: <><path d="m4 8 18-7v24L4 31z" fill="#fbe0bf" stroke="#ee7d11" strokeWidth="2" /><path d="m8 13 10-4 12 6v8l-12 4-10-5z" fill="#999" stroke="#444" strokeWidth="1.5" /><circle cx="14" cy="18" r="5" fill="#ddd" stroke="#444" strokeWidth="2" /></>,
  folder: <path d="M2 28V5h10l3 4h14v4M2 28 8 13h23l-6 15z" fill="#fff" stroke="#333" strokeWidth="2" />,
  history: <><path d="M1 1h6M25 1h6v6M1 1v6M1 25v6h6M31 25v6h-6M4 4h24v24H4z" stroke="#777" strokeWidth="2" /><path d="M7 7h13v13H7z" fill="#fff" stroke="#333" strokeWidth="2" /><path d="M13 13h13v13H13z" fill={ORANGE} stroke="#b85400" strokeWidth="2" /></>,
};

type TreeNode = {
  text: string;
  art: keyof typeof nodeArt;
  root?: boolean;
  toggle?: '+' | '-';
  hidden?: boolean;
  mark?: 'check' | 'ball';
  latest?: boolean;
  current?: boolean;
};

const tree: TreeNode[] = [
  { text: '历史记录建模模式', art: 'clock', root: true },
  { text: '模型视图', art: 'view', root: true, toggle: '+' },
  { text: '摄像机', art: 'camera', root: true, toggle: '+', mark: 'check' },
  { text: '非时间戳记几何体', art: 'folder', root: true, toggle: '+' },
  { text: '模型历史记录', art: 'history', root: true, toggle: '-', mark: 'ball', latest: true },
  { text: '基准坐标系 (0)', art: 'csys', latest: true },
  { text: '草图 (1) "SKETCH_0...', art: 'sketch', hidden: true, latest: true },
  { text: '拉伸 (2)', art: 'extrude', latest: true },
  { text: '草图 (3) "SKETCH_0...', art: 'sketch', hidden: true, latest: true },
  { text: '拉伸 (4)', art: 'extrude', latest: true },
  { text: '草图 (5) "SKETCH_0...', art: 'sketch', hidden: true, latest: true },
  { text: 'Ø9 沉头孔 (6)', art: 'hole', latest: true },
  { text: '阵列特征 [圆形] (7)', art: 'pattern', toggle: '+', latest: true },
  { text: 'Ø52 沉头孔 (8)', art: 'hole', latest: true },
  { text: '草图 (9) "SKETCH_0...', art: 'sketch', hidden: true, latest: true },
  { text: '拉伸 (10)', art: 'extrude', latest: true },
  { text: '基准平面 (12)', art: 'plane', hidden: true, latest: true },
  { text: '草图 (13) "SKETCH_...', art: 'sketch', hidden: true, latest: true },
  { text: '旋转 (14)', art: 'revolve', latest: true, current: true },
];

const blankRows = Array.from({ length: 14 }, (_, i) => i);

function CheckMark() {
  return <Svg size={16} box={16}><path d="m1.500 9 4.500 5L15 2.500" stroke="#27dd3a" strokeWidth="2.2" /></Svg>;
}

function Eye({ closed }: { closed?: boolean }) {
  return (
    <svg width="16" height="14" viewBox="0 0 16 14" fill="none" aria-hidden="true" className="shrink-0">
      <path d="M.8 7C3.500.8 12.500.8 15.200 7 12.500 13.200 3.500 13.200.8 7z" stroke="#333" strokeWidth="1.2" fill="#fff" />
      {closed
        ? <><circle cx="8" cy="7" r="3" stroke="#333" /><path d="M2.500 13.500 14 .5" stroke="#333" strokeWidth="1.2" /></>
        : <circle cx="8" cy="7" r="3.600" fill="#333" />}
    </svg>
  );
}

function Connector({ node, first, last }: { node: TreeNode; first: boolean; last: boolean }) {
  const x = node.root ? 9 : 28;
  const width = node.root ? 17 : 38;
  return (
    <svg width={width} height="19" viewBox={`0 0 ${width} 19`} fill="none" aria-hidden="true" className="shrink-0">
      <path d={`M${x + 0.5} ${first ? 10 : 0}V${last ? 10 : 19}M${x} 10.500H${width}`} stroke="#999" strokeDasharray="1 1" />
      {node.toggle && (
        <>
          <path d={`M${x - 3.5} 6.500h8v8h-8z`} fill="#fff" stroke="#d0d0d0" />
          <path d={node.toggle === '+' ? `M${x - 2} 10.500h5M${x + 0.5} 8v5` : `M${x - 2} 10.500h5`} stroke="#000" />
        </>
      )}
    </svg>
  );
}

function TreeRow({ node, index }: { node: TreeNode; index: number }) {
  const last = index === 4 || index === tree.length - 1;
  return (
    <tr className="h-5 border-b border-[#e8e8e8] even:bg-[#fafafa]">
      <td className="border-r border-[#e8e8e8] p-0">
        <div className="flex h-[19px] items-center overflow-hidden">
          <Connector node={node} first={index === 0} last={last} />
          {node.mark === 'check' && <span className="ml-[2px]"><CheckMark /></span>}
          {node.mark === 'ball' && (
            <span className="ml-[3px] mr-px h-[14px] w-[14px] shrink-0 rounded-full border border-[#1b7a26] bg-radial-[at_35%_30%] from-[#c4ffc0] to-[#27c838]" />
          )}
          {!node.root && <Eye closed={node.hidden} />}
          <span className={node.root && !node.mark ? 'ml-[2px] mr-[3px]' : 'mr-[3px]'}>
            <Svg size={16}>{nodeArt[node.art]}</Svg>
          </span>
          <span className={`whitespace-nowrap ${node.hidden ? 'text-[#a0a0a0]' : ''} ${node.current ? 'font-bold' : ''}`}>{node.text}</span>
        </div>
      </td>
      <td className="border-r border-[#e8e8e8] p-0 pl-[7px]">
        {node.current && (
          <Svg size={14} box={14}>
            <path d="M1 0v14M1 2.500h3M1 11.500h3" stroke="#333" strokeWidth="1.2" />
            <path d="M4 .5h3.500v3.500H4zM4 10h3.500v3.500H4z" fill="#fff" stroke="#333" />
            <path d="M4 5.200h3.500v3.500H4z" fill={ORANGE} stroke="#b85400" />
          </Svg>
        )}
      </td>
      <td className="border-r border-[#e8e8e8] p-0 pl-1">{node.latest && <CheckMark />}</td>
      <td className="p-0" />
    </tr>
  );
}

function PartNavigator() {
  return (
    <aside className="flex w-[322px] shrink-0 flex-col bg-white pl-2 pr-[9px] text-[12px] text-[#1a1a1a]">
      <div className="flex h-[27px] shrink-0 items-start">
        <div className="relative -ml-2 flex h-6 items-center gap-1 pl-[6px]">
          <Svg size={16} box={24}><PartGlyph /></Svg>
          <h2>部件导航器</h2>
          <span className="absolute -left-px -top-[5px] z-10 h-8 w-[99px] border-3 border-[#ff0000] shadow-[1px_2px_4px_rgba(0,0,0,0.5)]" />
          <span className="absolute left-[107px] top-0 z-10"><StepBadge n={2} /></span>
        </div>
        <button type="button" aria-label="最大化面板" className="ml-auto mr-[2px] mt-[7px] h-[11px] w-3 border border-t-2 border-black" />
      </div>
      <div className="flex min-h-0 flex-1 flex-col border border-[#d4d4d4]">
        <div className="min-h-0 flex-1 overflow-hidden">
          <table className="w-full table-fixed border-collapse">
            <colgroup>
              <col className="w-[195px]" />
              <col className="w-[39px]" />
              <col className="w-[24px]" />
              <col />
            </colgroup>
            <thead>
              <tr className="h-[21px] border-b border-[#d4d4d4] bg-[#efefef] text-left text-[#333]">
                <th className="border-r border-[#d4d4d4] p-0 pl-[6px] font-normal">
                  <span className="flex items-center gap-[17px] leading-5">
                    名称（已过滤）
                    <svg width="10" height="6" viewBox="0 0 10 6" aria-hidden="true"><path d="M5 0l5 6H0z" /></svg>
                  </span>
                </th>
                <th className="border-r border-[#d4d4d4] p-0 pl-[6px] font-normal leading-5">当...</th>
                <th className="border-r border-[#d4d4d4] p-0 pl-[6px] font-normal leading-5">最</th>
                <th className="p-0 pl-[6px] font-normal leading-5">附注</th>
              </tr>
            </thead>
            <tbody>
              {tree.map((node, i) => <TreeRow key={node.text} node={node} index={i} />)}
              {blankRows.map(i => (
                <tr key={i} className="h-5 border-b border-[#e8e8e8] even:bg-[#fafafa]">
                  <td className="border-r border-[#e8e8e8] p-0" />
                  <td className="border-r border-[#e8e8e8] p-0" />
                  <td className="border-r border-[#e8e8e8] p-0" />
                  <td className="p-0" />
                </tr>
              ))}
            </tbody>
          </table>
        </div>
        <div className="flex h-[17px] shrink-0 items-center bg-[#efefef] pl-[17px]">
          <span className="h-[2px] w-[226px] bg-[#858585]" />
        </div>
      </div>
      <div className="mt-[2px] h-[6px] shrink-0 border border-[#a8a8a8] bg-[#dcdcdc]" />
      <div className="flex shrink-0 flex-col pb-[6px] pt-px">
        {['搜索', '相关性', '细节', '预览'].map(s => (
          <button key={s} type="button" className="flex h-6 items-center gap-[9px] border-b-2 border-[#d0d0d0] pl-[10px] pt-[3px] text-[14px] leading-5 text-[#00688c]">
            <svg width="5" height="9" viewBox="0 0 5 9" aria-hidden="true"><path d="M0 0l5 4.500L0 9z" fill="#00688c" /></svg>
            {s}
          </button>
        ))}
      </div>
    </aside>
  );
}

/* ---------- graphics window ---------- */

type Point = [number, number];

// every circle of the flange projects to the same tilted ellipse, only scaled
function Ring({ c, r, fill, stroke = '#3a3a3a' }: { c: Point; r: number; fill: string; stroke?: string }) {
  return (
    <ellipse
      rx="0.598"
      ry="1"
      transform={`translate(${c[0]} ${c[1]}) rotate(-16.4) scale(${r})`}
      fill={fill}
      stroke={stroke}
      vectorEffect="non-scaling-stroke"
    />
  );
}

const FACE = '#b86d00';
const R = 302;
const disc: Point = [1371.7, 679.5];
const discBack: Point = [1418.7, 665.2];
const boss: Point = [1331.6, 691.8];
const floor: Point = [1362.4, 682.4];
const boltHoles: Point[] = [[1286.3, 454], [1441, 507.8], [1217.4, 625.8], [1526, 733.2], [1302.4, 851.2], [1457, 905]];

// the two straight silhouette edges of a cylinder, filled to close the wall
function wallPath(a: Point, b: Point, r: number) {
  const dx = 0.2854 * r;
  const dy = 0.9586 * r;
  return `M${a[0] - dx} ${a[1] - dy}L${b[0] - dx} ${b[1] - dy}L${b[0] + dx} ${b[1] + dy}L${a[0] + dx} ${a[1] + dy}z`;
}

function Wall({ a, b, r, id }: { a: Point; b: Point; r: number; id: string }) {
  const dx = 0.2911 * r;
  const dy = 0.957 * r;
  return (
    <>
      <linearGradient id={id} gradientUnits="userSpaceOnUse" href="#outerStops" x1={a[0] - dx} y1={a[1] - dy} x2={a[0] + dx} y2={a[1] + dy} />
      <Ring c={b} r={r} fill="url(#outer)" />
      <path d={wallPath(a, b, r)} fill={`url(#${id})`} />
    </>
  );
}

function ClipRing({ id, c, r }: { id: string; c: Point; r: number }) {
  return (
    <clipPath id={id}>
      <ellipse rx="0.598" ry="1" transform={`translate(${c[0]} ${c[1]}) rotate(-16.4) scale(${r})`} />
    </clipPath>
  );
}

function Flange() {
  return (
    <g>
      <defs>
        <linearGradient id="outerStops">
          <stop offset="0" stopColor="#d98000" />
          <stop offset=".05" stopColor="#ff9a00" />
          <stop offset=".22" stopColor="#ffa600" />
          <stop offset=".32" stopColor="#ffc010" />
          <stop offset=".375" stopColor="#ffcf1c" />
          <stop offset=".43" stopColor="#ffc412" />
          <stop offset=".52" stopColor="#ffae00" />
          <stop offset=".63" stopColor="#ff9c00" />
          <stop offset=".75" stopColor="#eb8c00" />
          <stop offset=".88" stopColor="#b86a00" />
          <stop offset=".96" stopColor="#875000" />
          <stop offset="1" stopColor="#804b00" />
        </linearGradient>
        <linearGradient id="outer" gradientUnits="userSpaceOnUse" href="#outerStops" x1="0" y1="-1" x2="0" y2="1" />
        <linearGradient id="inner" gradientUnits="userSpaceOnUse" x1="0" y1="-1" x2="0" y2="1">
          <stop offset="0" stopColor="#804b00" />
          <stop offset=".06" stopColor="#8a5000" />
          <stop offset=".18" stopColor="#c87700" />
          <stop offset=".28" stopColor="#f09000" />
          <stop offset=".38" stopColor="#ff9c00" />
          <stop offset=".5" stopColor="#ffae06" />
          <stop offset=".61" stopColor="#ffcf1c" />
          <stop offset=".72" stopColor="#ffba0a" />
          <stop offset=".85" stopColor="#ffa400" />
          <stop offset=".96" stopColor="#ff9c00" />
          <stop offset="1" stopColor="#d98000" />
        </linearGradient>
        <ClipRing id="boreClip" c={boss} r={161} />
        <ClipRing id="holeClip" c={floor} r={105} />
      </defs>

      <Wall a={disc} b={discBack} r={R} id="discWall" />
      <Ring c={disc} r={R} fill={FACE} />
      {boltHoles.map(c => <Ring key={c[0]} c={c} r={18} fill="url(#inner)" />)}

      <Wall a={boss} b={disc} r={181} id="bossWall" />
      <Ring c={boss} r={181} fill={FACE} />

      <Ring c={boss} r={161} fill="url(#inner)" />
      <g clipPath="url(#boreClip)">
        <Ring c={floor} r={161} fill={FACE} />
        <Ring c={floor} r={105} fill="url(#inner)" />
        <g clipPath="url(#holeClip)">
          <Ring c={[1372.5, 679.3]} r={105} fill="#c27500" />
          <Ring c={[1400.7, 670.8]} r={105} fill="url(#inner)" />
          <Ring c={[1409.3, 668]} r={105} fill="#ffffff" />
        </g>
        <Ring c={floor} r={105} fill="none" />
      </g>
      <Ring c={boss} r={161} fill="none" />
    </g>
  );
}

function DatumAxes() {
  return (
    <g fontFamily="Roboto, 'Liberation Sans', sans-serif" fontSize="14" fontWeight="300" textAnchor="middle">
      <g fill="none" stroke="#cfcfcf" strokeWidth="1.2">
        <path d="M1369 617 1421 600.300 1423.300 664 1465.700 678.700 1414.300 694" />
        <path d="M1368.300 592 1367.500 560M1423 664 1461 652.500M1428 698 1446 704.500" />
      </g>
      <path d="M1369 616 1368.300 592M1370 628v-11" stroke="#9a9aff" />
      <path d="M1369 616.300 1388 610M1369 616.300 1412.300 630.700 1414.300 694M1413 667.700 1423 664M1406 691 1428 698" fill="none" stroke="#1a1aff" />
      <path d="M1367 551 1370.500 569h-6z" fill="#a8a8a8" />
      <path d="m1475 648.700-13 1 1.500 5z" fill="#dcdcdc" />
      <path d="m1457 708.700-13-6-1 4.500z" fill="#c4c4c4" />
      <path d="M1371.700 680 1367.500 640 1370 628 1373 640z" fill="#267326" />
      <path d="M1371.700 680 1395 668.500 1413.300 667.500 1400 673.500z" fill="#d8393c" />
      <path d="M1371.700 680 1394 685 1406 691 1391 690.500z" fill="#0a3fd0" />
      <path d="M1364 680h14M1371.700 673.500v13" stroke="#0000e6" strokeWidth="2" />
      <text x="1366" y="552" fill="#cfcfcf">Y</text>
      <text x="1480" y="652" fill="#cfcfcf">X</text>
      <text x="1461" y="716" fill="#cfcfcf">Z</text>
      <text x="1384" y="625" fill="#1f8a2a">YC</text>
      <text x="1406" y="663" fill="#d03236">XC</text>
      <text x="1399" y="706" fill="#1c4fe0">ZC</text>
    </g>
  );
}

function ViewTriad() {
  return (
    <g fontFamily="Roboto, 'Liberation Sans', sans-serif" fontSize="12" fontWeight="300" textAnchor="middle">
      <path d="m436.700 881 32.600-9.700 27 9.400-32.600 10zM436.700 881l1.600 40.300 27.400 9.400 32-9.700-1.400-40.300M463.700 890.700l2 40" fill="none" stroke="#a8a8a8" />
      <path d="M463.500 882 462.700 851H460l4.300-19 5.700 18.500h-2.700l1.200 31z" fill="#267f2a" />
      <path d="m496.700 890 13-3.500-1-3 15 1.200-12 8.500 0-3-15 4z" fill="#e03c3c" />
      <path d="m479.500 903.500 20 6 .5-2 13.500 10-17-.5 1-3-18-6z" fill="#0b45e8" />
      <text x="464" y="827" fill="#3f9c46">Y</text>
      <text x="531" y="886" fill="#e04848">X</text>
      <text x="520" y="924" fill="#2c55e8">Z</text>
    </g>
  );
}

function GraphicsWindow() {
  return (
    <main className="flex min-w-0 flex-1 flex-col border-l border-[#a0a0a0] bg-white">
      <div className="flex h-[27px] shrink-0 items-start border-b-2 border-[#00668a]">
        <div className="flex h-[25px] items-center bg-[#00668a] pl-[6px] pr-[7px] text-[12px] text-white">
          <Svg size={16} box={24}><PartGlyph /></Svg>
          <span className="pl-1 pr-[7px]">旋转202478.prt</span>
          <button type="button" aria-label="关闭标签页">
            <Svg size={9} box={9}><path d="m1 1 7 7M8 1 1 8" stroke="#fff" strokeWidth="1.8" /></Svg>
          </button>
        </div>
      </div>
      <svg viewBox="360 205 1560 805" preserveAspectRatio="xMidYMid meet" className="min-h-0 w-full flex-1" role="img" aria-label="法兰模型">
        <Flange />
        <DatumAxes />
        <ViewTriad />
      </svg>
    </main>
  );
}

/* ---------- status bar and input method ---------- */

const imeIcons: { label: string; art: ReactNode }[] = [
  { label: '标点', art: <path d="M3 3h2.500v3H3zM10 8h3v4l-2 3h-1l1-3h-1z" fill="#0a6fd6" /> },
  { label: '语音输入', art: <><rect x="5.500" y="1" width="5" height="9" rx="2.500" fill="#0a6fd6" /><path d="M3 8c0 5 10 5 10 0M8 12v3M6 15h4" stroke="#0a6fd6" strokeWidth="1.4" /></> },
  { label: '软键盘', art: <><rect x="1" y="2.500" width="14" height="11" rx="1" stroke="#0a6fd6" strokeWidth="1.6" /><path d="M3 5.500h10M3 8h10" stroke="#0a6fd6" strokeWidth="1.6" strokeDasharray="2 1" /><path d="M4 11h8" stroke="#0a6fd6" strokeWidth="1.5" /></> },
  { label: '皮肤', art: <><path d="m1 5 4-3c1 2 4 2 5 0l4 3-2 3-1-1v7H4V7L3 8z" fill="#c86ad8" /><path d="M4 10h7v4H4z" fill="#5f9cf5" /><circle cx="13.500" cy="1.800" r="2.400" fill="#f4512c" /></> },
  { label: '游戏', art: <><path d="M2 9c0-8 12-8 12 0 0 3-3 3-4 1H6c-1 2-4 2-4-1z" stroke="#0a6fd6" strokeWidth="2" /><path d="M5 7h3M6.500 5.500v3M10 7h1.500M2 14l3-2M14 14l-3-2" stroke="#0a6fd6" strokeWidth="1.5" /></> },
  { label: '工具箱', art: <path d="M2 3a1 1 0 0 1 1-1h4v5H2zM9 4.500a2.500 2.500 0 1 1 5 0 2.500 2.500 0 0 1-5 0M2 9h5v5H3a1 1 0 0 1-1-1zM9 9h5v4a1 1 0 0 1-1 1H9z" fill="#0a6fd6" /> },
  { label: '设置', art: <><circle cx="8" cy="8" r="5.500" stroke="#0a6fd6" strokeWidth="2.500" strokeDasharray="3 1.300" /><circle cx="8" cy="8" r="4" stroke="#0a6fd6" strokeWidth="1.600" /><path d="M8 6v7" stroke="#0a6fd6" strokeWidth="1.600" /></> },
];

function ImeBar() {
  return (
    <div className="absolute bottom-[3px] left-[1155px] flex h-[27px] w-[226px] items-center rounded-sm border border-[#a9c8e6] bg-white pl-8">
      <span className="absolute -left-px -top-1 h-8 w-8">
        <svg width="32" height="32" viewBox="0 0 32 32" fill="none" aria-hidden="true">
          <path d="M1 5 25 1c2 0 3 0 3 2l3 22c0 2 0 3-2 3L9 32c-2 0-3-1-4-3L0 8c0-2 0-3 1-3z" fill="#f4561c" />
          <path d="M23 8C14 5 8 8 8 12c0 5 15 2 15 7 0 5-8 6-15 3" stroke="#fff" strokeWidth="4" strokeLinecap="round" />
        </svg>
      </span>
      <button type="button" aria-label="中英文切换" className="w-6 text-center font-['Open_Sans',sans-serif] text-[18px] leading-6 text-[#0a6fd6]">A</button>
      {imeIcons.map(i => (
        <button key={i.label} type="button" aria-label={i.label} className="flex w-6 justify-center">
          <Svg size={16} box={16}>{i.art}</Svg>
        </button>
      ))}
    </div>
  );
}

export default function App() {
  return (
    <div className="relative flex h-screen flex-col overflow-hidden bg-white font-['Noto_Sans','Noto_Sans_CJK_SC',sans-serif]">
      <Header />
      <Ribbon />
      <SelectionBar />
      <div className="flex min-h-0 flex-1">
        <Rail />
        <PartNavigator />
        <GraphicsWindow />
      </div>
      <footer className="h-[25px] shrink-0 border-b-3 border-t border-b-[#d6e6ea] border-t-[#a0a0a0] bg-white pl-[3px] text-[11px] font-bold leading-[21px] text-[#1a1a1a]">
        选择对象并使用 MB3，或者双击某一对象
      </footer>
      <p className="pointer-events-none absolute bottom-0 right-1 whitespace-nowrap font-['Noto_Sans_CJK_SC',sans-serif] text-[37px] font-normal leading-[60px] text-[#e4e4e4] [text-shadow:1px_1px_1px_#8a8a8a]">
        CSDN @山涧果子
      </p>
      <ImeBar />
    </div>
  );
}
